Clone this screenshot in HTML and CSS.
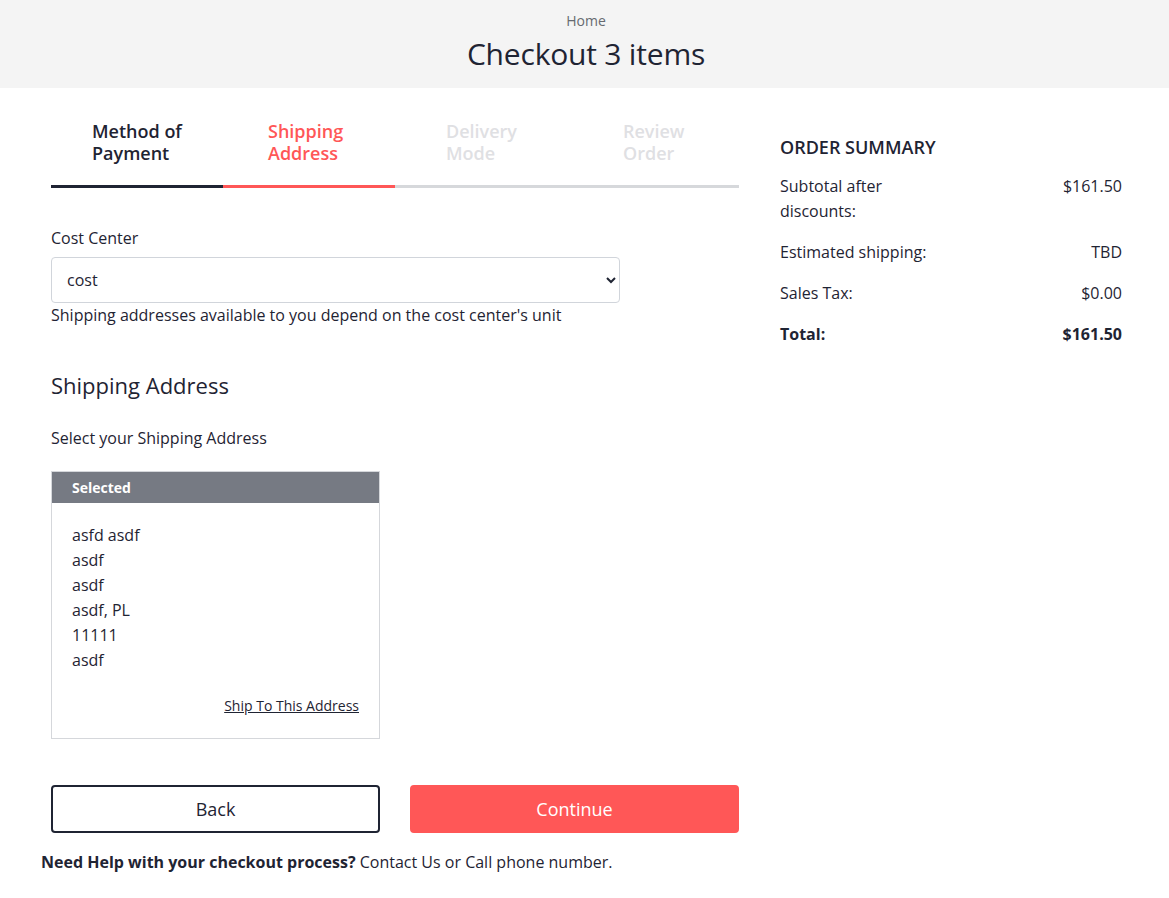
FILE: index.html
```html
<!DOCTYPE html>
<html lang="en">
<head>
    <meta charset="UTF-8">
    <meta name="viewport" content="width=device-width, initial-scale=1.0">
    <title>Checkout</title>
    <link rel="stylesheet" href="styles.css">
</head>
<body>
    <div class="page-header">
        <a class="breadcrumb" href="#">Home</a>
        <h1 class="page-title">Checkout 3 items</h1>
    </div>

    <div class="checkout">
        <div class="checkout-main">
            <div class="steps">
                <div class="step step-done"><span class="step-name">Method of Payment</span></div>
                <div class="step step-active"><span class="step-name">Shipping Address</span></div>
                <div class="step"><span class="step-name">Delivery Mode</span></div>
                <div class="step"><span class="step-name">Review Order</span></div>
            </div>

            <div class="cost-center">
                <label class="field-label" for="costCenter">Cost Center</label>
                <select class="field-select" id="costCenter">
                    <option>cost</option>
                </select>
                <p class="field-note">Shipping addresses available to you depend on the cost center's unit</p>
            </div>

            <h2 class="section-title">Shipping Address</h2>
            <p class="section-text">Select your Shipping Address</p>

            <div class="address-card">
                <div class="address-card-head">Selected</div>
                <div class="address-card-body">
                    <div>asfd asdf</div>
                    <div>asdf</div>
                    <div>asdf</div>
                    <div>asdf, PL</div>
                    <div>11111</div>
                    <div>asdf</div>
                    <div class="address-action"><a href="#">Ship To This Address</a></div>
                </div>
            </div>

            <div class="actions">
                <button class="bttn bttn-back">Back</button>
                <button class="bttn bttn-continue">Continue</button>
            </div>

            <p class="help"><b>Need Help with your checkout process?</b> Contact Us or Call phone number.</p>
        </div>

        <div class="summary">
            <h3 class="summary-title">ORDER SUMMARY</h3>
            <div class="summary-row">
                <span class="summary-label">Subtotal after discounts:</span>
                <span>$161.50</span>
            </div>
            <div class="summary-row">
                <span class="summary-label">Estimated shipping:</span>
                <span>TBD</span>
            </div>
            <div class="summary-row">
                <span class="summary-label">Sales Tax:</span>
                <span>$0.00</span>
            </div>
            <div class="summary-row summary-total">
                <span class="summary-label">Total:</span>
                <span>$161.50</span>
            </div>
        </div>
    </div>
</body>
</html>
```

FILE: styles.css
```css
* {
    box-sizing: border-box;
}

body {
    margin: 0;
    font-family: "Open Sans", "Liberation Sans", sans-serif;
    color: #1f2433;
    background: #fff;
}

.page-header {
    background-color: #f4f4f4;
    height: 88px;
    display: flex;
    flex-direction: column;
    align-items: center;
    padding-top: 11px;
    padding-left: 3px;
}

.breadcrumb {
    font-size: 14px;
    line-height: 20px;
    color: #666a70;
    text-decoration: none;
}

.page-title {
    margin: 3px 0 0;
    font-size: 30px;
    font-weight: 400;
    line-height: 40px;
    letter-spacing: -0.2px;
}

.checkout {
    display: flex;
    gap: 41px;
    padding: 0 47px 0 51px;
}

.checkout-main {
    width: 688px;
    flex: 0 0 auto;
}

.steps {
    display: flex;
    padding-top: 32px;
}

.step {
    flex: 0 0 25%;
    padding: 0 0 21px 41px;
    font-size: 18px;
    font-weight: 600;
    line-height: 22px;
    color: #dfe0e3;
    border-bottom: 3px solid #d6d8db;
}

.step:nth-child(2) {
    padding-left: 45px;
}

.step:nth-child(3) {
    padding-left: 51px;
}

.step:nth-child(4) {
    padding-left: 56px;
}

.step-name {
    display: block;
    max-width: 100px;
}

.step-done {
    color: #1f2433;
    border-bottom-color: #1f2433;
}

.step-active {
    color: #ff5757;
    border-bottom-color: #ff5757;
}

.cost-center {
    margin-top: 39px;
}

.field-label {
    display: block;
    font-size: 16px;
    line-height: 22px;
    margin-bottom: 8px;
}

.field-select {
    width: 569px;
    height: 46px;
    padding: 0 10px 0 11px;
    border: 1px solid #d1d5db;
    border-radius: 4px;
    background: #fff;
    font-family: inherit;
    font-size: 16px;
    color: #1f2433;
}

.field-note {
    margin: 1px 0 0;
    font-size: 16px;
    line-height: 22px;
}

.section-title {
    margin: 44px 0 0;
    font-size: 22px;
    font-weight: 400;
    line-height: 30px;
}

.section-text {
    margin: 27px 0 0;
    font-size: 16px;
    line-height: 22px;
}

.address-card {
    width: 329px;
    margin-top: 22px;
    border: 1px solid #d5d7db;
}

.address-card-head {
    background-color: #767a83;
    color: #fff;
    font-size: 14px;
    font-weight: 700;
    line-height: 31px;
    padding: 0 20px;
}

.address-card-body {
    padding: 20px 20px 20px;
    font-size: 16px;
    line-height: 25px;
}

.address-action {
    text-align: right;
    font-size: 14px;
    margin-top: 20px;
}

.address-action a {
    color: #1f2433;
}

.actions {
    display: flex;
    gap: 30px;
    margin-top: 46px;
}

.bttn {
    flex: 1;
    height: 48px;
    border-radius: 4px;
    font-family: inherit;
    font-size: 18px;
    cursor: pointer;
}

.bttn-back {
    background: #fff;
    border: 2px solid #1f2433;
    color: #1f2433;
}

.bttn-continue {
    background: #ff5757;
    border: 2px solid #ff5757;
    color: #fff;
}

.help {
    margin: 18px 0 0 -10px;
    font-size: 16px;
    line-height: 22px;
}

.summary {
    flex: 1;
    padding-top: 47px;
}

.summary-title {
    margin: 0 0 15px;
    font-size: 18px;
    font-weight: 600;
    line-height: 24px;
}

.summary-row {
    display: flex;
    justify-content: space-between;
    font-size: 16px;
    line-height: 25px;
    margin-bottom: 16px;
}

.summary-label {
    max-width: 50%;
}

.summary-total {
    font-weight: 700;
}
```
